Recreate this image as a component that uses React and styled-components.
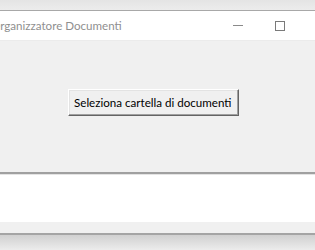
import React from "react";
import styled, { createGlobalStyle } from "styled-components";

const GlobalStyle = createGlobalStyle`
  html, body { margin: 0; padding: 0; background: #f0f0f0; }
  body { width: 315px; height: 250px; overflow: hidden; font-family: Lato, "Noto Sans", sans-serif; }
`;

const Screen = styled.div`
  display: flex;
  flex-direction: column;
  width: 315px;
  height: 250px;
  overflow: hidden;
`;

const TopStrip = styled.div`
  height: 10px;
  background: linear-gradient(#e4e4e4, #ececec);
  border-bottom: 1px solid #a8a8a8;
`;

const TitleBar = styled.div`
  display: flex;
  align-items: center;
  height: 29px;
  background: #ffffff;
  border-bottom: 1px solid #ebebeb;
`;

const Title = styled.span`
  flex: 1;
  margin-left: -9px;
  font-size: 11.6px;
  color: #8f8f8f;
  white-space: nowrap;
`;

const Controls = styled.div`
  display: flex;
  align-items: center;
  gap: 32px;
  margin-right: 30px;
`;

const Minimize = styled.span`
  width: 10px;
  height: 1px;
  background: #8a8a8a;
`;

const Maximize = styled.span`
  width: 8px;
  height: 8px;
  border: 1px solid #7a7a7a;
`;

const Client = styled.div`
  display: flex;
  justify-content: flex-start;
  height: 131px;
  padding: 48px 0 0 68px;
  box-sizing: border-box;
  background: #f0f0f0;
`;

const Button = styled.button`
  height: 27px;
  padding: 0 6px 0 5px;
  font-family: Lato, "Noto Sans", sans-serif;
  font-size: 11.6px;
  color: #000;
  background: #f0f0f0;
  border: 1px solid;
  border-color: #ffffff #646464 #646464 #ffffff;
  box-shadow: inset -1px -1px 0 #a0a0a0, inset 1px 1px 0 #e3e3e3;
  cursor: default;
`;

const Divider = styled.div`
  height: 2px;
  background: #a0a0a0;
  border-bottom: 1px solid #e4e4e4;
`;

const WhitePanel = styled.div`
  height: 47px;
  background: #ffffff;
`;

const BottomBand = styled.div`
  height: 11px;
  background: #f0f0f0;
  border-bottom: 2px solid #a4a4a4;
`;

const Shadow = styled.div`
  flex: 1;
  background: linear-gradient(#d0d0d0, #ececec);
`;

export default function App() {
  return (
    <>
      <GlobalStyle />
      <Screen>
        <TopStrip />
        <TitleBar>
          <Title>Organizzatore Documenti</Title>
          <Controls>
            <Minimize />
            <Maximize />
          </Controls>
        </TitleBar>
        <Client>
          <Button>Seleziona cartella di documenti</Button>
        </Client>
        <Divider />
        <WhitePanel />
        <BottomBand />
        <Shadow />
      </Screen>
    </>
  );
}
